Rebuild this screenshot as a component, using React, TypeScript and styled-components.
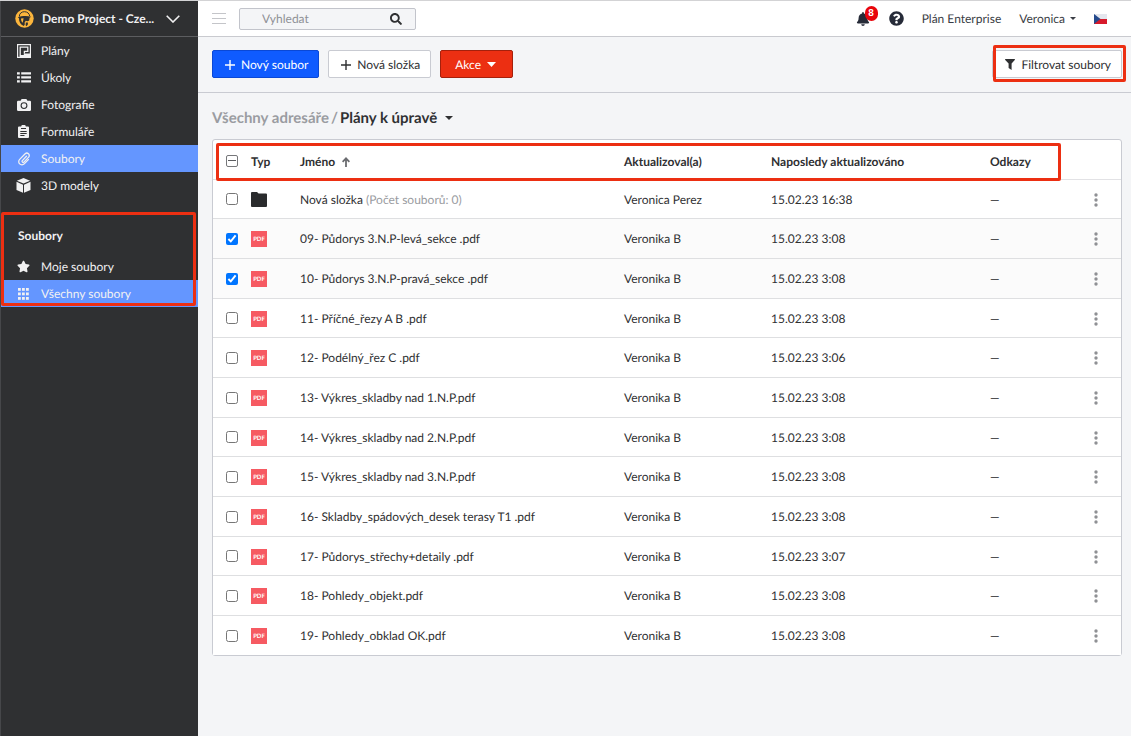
import React, { useEffect, useRef, useState } from "react";
import styled, { createGlobalStyle, css } from "styled-components";
import { FaBell, FaQuestionCircle, FaSearch, FaStar } from "react-icons/fa";

const GlobalStyle = createGlobalStyle`
  *, *::before, *::after { box-sizing: border-box; }
  body {
    margin: 0;
    background: #f4f5f7;
    color: #2f3032;
    font-family: Lato, "Open Sans", sans-serif;
    font-size: 12px;
    line-height: 16px;
    text-rendering: geometricPrecision;
  }
  button, input { font: inherit; color: inherit; text-rendering: inherit; }
  a { color: inherit; text-decoration: none; }
  svg { display: block; flex: none; }
`;

const Page = styled.div`
  display: flex;
  min-height: 100vh;
  border-top: 1px solid #d3d3d5;
`;

const Sidebar = styled.aside`
  flex: none;
  width: 198px;
  background: #2f3032;
  border-left: 1px solid #46474a;
  color: #f1f1f2;
`;

const ProjectButton = styled.button`
  display: flex;
  align-items: center;
  width: 100%;
  height: 36px;
  padding: 0 18px 0 14px;
  border: 0;
  border-bottom: 1px solid #5c5d60;
  background: none;
  font-weight: 700;
  text-align: left;
`;

const ProjectName = styled.span`
  flex: 1;
  padding-left: 8px;
  white-space: nowrap;
`;

const NavList = styled.ul`
  margin: 0;
  padding: 0;
  list-style: none;
`;

const NavLink = styled.a<{ $active?: boolean }>`
  display: flex;
  align-items: center;
  gap: 10px;
  height: 27px;
  padding-left: 15px;
  background: ${(p) => (p.$active ? "#6496ff" : "transparent")};
`;

const NavIcon = styled.span`
  display: flex;
  justify-content: center;
  width: 15px;
`;

const highlight = css`
  content: "";
  position: absolute;
  border: 3px solid #ec2f12;
  border-radius: 2px;
  pointer-events: none;
`;

const Section = styled.section`
  position: relative;
  margin-top: 13px;
  padding-top: 16px;
  &::after {
    ${highlight}
    inset: 0 2px 1px 0;
  }
`;

const SectionTitle = styled.h2`
  margin: 0;
  padding: 0 0 9px 17px;
  font-size: 12px;
  line-height: 16px;
`;

const Main = styled.main`
  flex: 1;
  min-width: 0;
`;

const TopBar = styled.header`
  display: flex;
  align-items: center;
  height: 36px;
  padding: 0 24px 0 14px;
  background: #fff;
  border-bottom: 1px solid #c9cacf;
`;

const PlainButton = styled.button`
  display: flex;
  align-items: center;
  gap: 5px;
  padding: 0;
  border: 0;
  background: none;
`;

const SearchBox = styled.label`
  display: flex;
  align-items: center;
  width: 177px;
  height: 22px;
  margin-left: 13px;
  padding: 0 13px 0 22px;
  border: 1px solid #c2c4cb;
  border-radius: 2px;
  background: #f4f5f7;
`;

const SearchInput = styled.input`
  flex: 1;
  min-width: 0;
  padding: 0;
  border: 0;
  outline: 0;
  background: none;
  &::placeholder { color: #8f9196; opacity: 1; }
`;

const Account = styled.div`
  display: flex;
  align-items: center;
  gap: 18px;
  margin-left: auto;
  color: #3a3d45;
`;

const IconRow = styled.div`
  display: flex;
  align-items: center;
  gap: 19px;
  color: #262b38;
`;

const BellButton = styled(PlainButton)`
  position: relative;
`;

const Badge = styled.span`
  position: absolute;
  top: -6px;
  left: 9px;
  width: 13px;
  height: 15px;
  border-radius: 7px;
  background: #e8050b;
  color: #fff;
  font-family: "Liberation Sans", sans-serif;
  font-size: 10px;
  font-weight: 700;
  line-height: 15px;
  text-align: center;
`;

const Toolbar = styled.div`
  display: flex;
  align-items: flex-start;
  gap: 9px;
  height: 56px;
  padding: 13px 9px 0 14px;
  border-bottom: 1px solid #c9cbd2;
`;

const tones = {
  primary: { bg: "#0f5bff", border: "#0a48d6", text: "#fff" },
  danger: { bg: "#ec2f12", border: "#a5200c", text: "#fff" },
  plain: { bg: "#fff", border: "#c9cbd2", text: "#2f3032" },
};

const Button = styled.button<{ $tone: keyof typeof tones }>`
  display: flex;
  align-items: center;
  gap: 6px;
  height: 28px;
  padding: 1px 10px 0 12px;
  border: 1px solid ${(p) => tones[p.$tone].border};
  border-radius: 2px;
  background: ${(p) => tones[p.$tone].bg};
  color: ${(p) => tones[p.$tone].text};
  white-space: nowrap;
`;

const ActionButton = styled(Button)`
  padding: 1px 16px 0 14px;
`;

const FilterHolder = styled.div`
  position: relative;
  margin-left: auto;
  &::after {
    ${highlight}
    inset: -5px -4px -4px 1px;
  }
`;

const Breadcrumb = styled.nav`
  display: flex;
  align-items: center;
  gap: 2px;
  padding: 15px 14px 11px;
  color: #9a9ca1;
  font-size: 15px;
  font-weight: 700;
  line-height: 20px;
`;

const CurrentFolder = styled(PlainButton)`
  gap: 8px;
  color: #2f3032;
`;

const Card = styled.div`
  position: relative;
  margin: 0 9px 0 14px;
  border: 1px solid #c9cbd2;
  border-radius: 3px;
  background: #fff;
  &::after {
    ${highlight}
    top: 3px;
    left: 3px;
    right: 60px;
    height: 38px;
  }
`;

const Table = styled.table`
  width: 100%;
  table-layout: fixed;
  border-collapse: separate;
  border-spacing: 0;
`;

const HeadCell = styled.th<{ $width?: number }>`
  width: ${(p) => (p.$width ? `${p.$width}px` : "auto")};
  height: 40px;
  padding: 4px 0 0;
  border-bottom: 1px solid #e2e2e5;
  text-align: left;
`;

const Row = styled.tr<{ $selected: boolean }>`
  height: 40px;
  background: ${(p) => (p.$selected ? "#fbfbfb" : "#fff")};
  &:nth-child(3n + 1), &:last-child { height: 39px; }
  & > td {
    padding: 1px 0 0;
    border-bottom: 1px solid #dedfe1;
  }
  &:last-child > td { border-bottom: 0; }
`;

const CheckCell = styled.td`
  text-align: center;
`;

const Check = styled.input`
  display: block;
  width: 12px;
  height: 12px;
  margin: 0 auto 1px;
  accent-color: #0075ff;
`;

const PartialCheck = styled.input`
  display: flex;
  align-items: center;
  justify-content: center;
  width: 12px;
  height: 12px;
  margin: 0 auto 2px;
  appearance: none;
  border: 1px solid #76777a;
  border-radius: 2px;
  &::after {
    content: "";
    width: 8px;
    height: 1px;
    background: #5c5d60;
  }
`;

const SortButton = styled(PlainButton)`
  gap: 7px;
  font-weight: 700;
`;

const Muted = styled.span`
  color: #9a9ca1;
`;

const PdfTag = styled.span`
  display: block;
  width: 16px;
  height: 16px;
  background: #f65a62;
  color: #fff;
  font-size: 6px;
  font-weight: 700;
  line-height: 17px;
  text-align: center;
`;

const MoreButton = styled(PlainButton)`
  margin-left: 12px;
  padding: 0 2px;
`;

const Caret = ({ w = 6, h = 3 }: { w?: number; h?: number }) => (
  <svg width={w} height={h} viewBox="0 0 10 5" preserveAspectRatio="none" fill="currentColor">
    <path d="M0 0H10L5 5Z" />
  </svg>
);

const Plus = () => (
  <svg width="10" height="10" viewBox="0 0 10 10" stroke="currentColor" strokeWidth="1.4">
    <path d="M5 0V10M0 5H10" />
  </svg>
);

const Logo = () => (
  <svg width="19" height="19" viewBox="0 0 19 19">
    <circle cx="9.5" cy="9.5" r="9.2" fill="#fbb53c" />
    <path d="M4.3 7.6C4.2 4.7 6.4 2.7 9.4 2.7s5 1.8 5.3 4.4" fill="none" stroke="#2f3032" strokeWidth="1" />
    <path d="M2.8 8.4C6 6.9 12 6.5 16.2 7.7L14.6 8.7 14.2 11.4 12.6 12.2 10.8 11.8 9.6 13.6 9.8 15.4 8.8 17C5.5 15.6 3.9 12.6 4 9.2Z" fill="#2f3032" />
    <path d="M6 9.4L8.6 9.3 8.2 11.6 7.6 13.8C6.6 12.8 6 11.2 6 9.4Z" fill="#fbb53c" />
    <path d="M10.9 13.6H12.9V15.4L11.6 17.2 10.6 16.2Z" fill="#2f3032" />
  </svg>
);

const PlanIcon = () => (
  <svg width="14" height="14" viewBox="0 0 14 14">
    <path d="M.6 .6H13.4V13.4H.6Z" fill="none" stroke="#f1f1f2" strokeWidth="1.2" />
    <path d="M3.200 11.200V3.200H10.800V7.400H7.400V9.600" fill="none" stroke="#f1f1f2" strokeWidth="1.300" />
    <path d="M5.300 5.400H8.800M2.600 11H6.800V9.600H13V13H2.600Z" stroke="none" fill="#f1f1f2" />
  </svg>
);

const ListIcon = () => (
  <svg width="14" height="11" viewBox="0 0 14 11" fill="#f1f1f2">
    {[0, 4, 8].map((y) => (
      <path key={y} d={`M0 ${y + 0.2}h2.8v2.4h-2.8ZM4.2 ${y + 0.2}h9.8v2.4h-9.8Z`} />
    ))}
  </svg>
);

const CameraIcon = () => (
  <svg width="14" height="12" viewBox="0 0 14 12">
    <path d="M1.3 1.8H3.6L4.6 0H9.4L10.4 1.8H12.7A1.2 1.2 0 0 1 14 3V10.7A1.2 1.2 0 0 1 12.7 12H1.3A1.2 1.2 0 0 1 0 10.7V3A1.2 1.2 0 0 1 1.3 1.8Z" fill="#f1f1f2" />
    <circle cx="7" cy="6.6" r="2.9" fill="none" stroke="#2f3032" strokeWidth="1.1" />
  </svg>
);

const FormIcon = () => (
  <svg width="11" height="13" viewBox="0 0 11 13">
    <path d="M1 1.6H3.2A2.3 1.8 0 0 1 7.8 1.6H10A1 1 0 0 1 11 2.6V12A1 1 0 0 1 10 13H1A1 1 0 0 1 0 12V2.6A1 1 0 0 1 1 1.6Z" fill="#f1f1f2" />
    <path d="M3 3.5H8M2.3 6.5H8.7M2.3 8.5H8.7M2.3 10.5H6.5" stroke="#2f3032" strokeWidth="1" />
  </svg>
);

const ClipIcon = () => (
  <svg width="14" height="14" viewBox="0 0 24 24" fill="none" stroke="#f1f1f2" strokeWidth="2.2" strokeLinecap="round" strokeLinejoin="round">
    <path d="M16.2 7.2L9.2 14.8a1.8 1.8 0 0 0 2.6 2.5L20 8.7a4.2 4.2 0 0 0-6-5.8L4.6 12.6a5.5 5.5 0 0 0 7.8 7.8L19.5 13" />
  </svg>
);

const CubeIcon = () => (
  <svg width="15" height="15" viewBox="0 0 14 15" fill="#f1f1f2">
    <path d="M7 .1L13.6 2.7 7 5.6 .4 2.7Z" />
    <path d="M0 3.8L6.5 6.7V14.8L0 11.9Z" />
    <path d="M14 3.8L7.5 6.7V14.8L14 11.9Z" />
  </svg>
);

const GridIcon = () => (
  <svg width="11" height="12" viewBox="0 0 11 12" fill="#f1f1f2">
    {[0, 4, 8].map((x) => [0, 4.5, 9].map((y) => <rect key={`${x}-${y}`} x={x} y={y} width="2.8" height="2.8" />))}
  </svg>
);

const FilterIcon = () => (
  <svg width="10" height="11" viewBox="0 0 10 11" fill="currentColor">
    <path d="M.3 0H9.7L10 .8 6.6 4.6V11L3.6 9V4.6L0 .8Z" />
  </svg>
);

const FolderIcon = () => (
  <svg width="16" height="15" viewBox="0 0 16 15" fill="#2a2b2d">
    <path d="M1 0H6L7.6 1.6H15a1 1 0 0 1 1 1V14a1 1 0 0 1-1 1H1a1 1 0 0 1-1-1V1a1 1 0 0 1 1-1Z" />
  </svg>
);

const FlagIcon = () => (
  <svg width="13" height="10" viewBox="0 0 13 10">
    <path d="M0 0H13V5H0Z" fill="#e4e7ee" />
    <path d="M0 5H13V10H0Z" fill="#d71a2b" />
    <path d="M0 0L6.5 5 0 10Z" fill="#244a8c" />
  </svg>
);

const navItems = [
  { label: "Plány", icon: <PlanIcon /> },
  { label: "Úkoly", icon: <ListIcon /> },
  { label: "Fotografie", icon: <CameraIcon /> },
  { label: "Formuláře", icon: <FormIcon /> },
  { label: "Soubory", icon: <ClipIcon />, active: true },
  { label: "3D modely", icon: <CubeIcon /> },
];

const files = [
  { name: "Nová složka", note: "(Počet souborů: 0)", by: "Veronica Perez", at: "15.02.23 16:38" },
  { name: "09- Půdorys 3.N.P-levá_sekce .pdf", at: "15.02.23 3:08", checked: true },
  { name: "10- Půdorys 3.N.P-pravá_sekce .pdf", at: "15.02.23 3:08", checked: true },
  { name: "11- Příčné_řezy A B .pdf", at: "15.02.23 3:08" },
  { name: "12- Podélný_řez C .pdf", at: "15.02.23 3:06" },
  { name: "13- Výkres_skladby nad 1.N.P.pdf", at: "15.02.23 3:08" },
  { name: "14- Výkres_skladby nad 2.N.P.pdf", at: "15.02.23 3:08" },
  { name: "15- Výkres_skladby nad 3.N.P.pdf", at: "15.02.23 3:08" },
  { name: "16- Skladby_spádových_desek terasy T1 .pdf", at: "15.02.23 3:08" },
  { name: "17- Půdorys_střechy+detaily .pdf", at: "15.02.23 3:07" },
  { name: "18- Pohledy_objekt.pdf", at: "15.02.23 3:08" },
  { name: "19- Pohledy_obklad OK.pdf", at: "15.02.23 3:08" },
];

function FileTable() {
  const [selected, setSelected] = useState(files.map((f) => !!f.checked));
  const allRef = useRef<HTMLInputElement>(null);
  const count = selected.filter(Boolean).length;

  useEffect(() => {
    if (allRef.current) allRef.current.indeterminate = count > 0 && count < files.length;
  }, [count]);

  return (
    <Card>
      <Table>
        <thead>
          <tr>
            <HeadCell $width={38}>
              <PartialCheck
                ref={allRef}
                type="checkbox"
                aria-label="Vybrat vše"
                checked={count === files.length}
                onChange={(e) => setSelected(files.map(() => e.target.checked))}
              />
            </HeadCell>
            <HeadCell $width={49}>Typ</HeadCell>
            <HeadCell>
              <SortButton>
                Jméno
                <svg width="8" height="10" viewBox="0 0 8 10" fill="none" stroke="#6b6c70" strokeWidth="1.8">
                  <path d="M4 10V1.5M.6 4.8L4 1.3 7.4 4.8" />
                </svg>
              </SortButton>
            </HeadCell>
            <HeadCell $width={147}>Aktualizoval(a)</HeadCell>
            <HeadCell $width={219}>Naposledy aktualizováno</HeadCell>
            <HeadCell $width={90}>Odkazy</HeadCell>
            <HeadCell $width={41} aria-label="Akce" />
          </tr>
        </thead>
        <tbody>
          {files.map((file, i) => (
            <Row key={file.name} $selected={selected[i]}>
              <CheckCell>
                <Check
                  type="checkbox"
                  aria-label={file.name}
                  checked={selected[i]}
                  onChange={() => setSelected(selected.map((s, j) => (j === i ? !s : s)))}
                />
              </CheckCell>
              <td>{file.note ? <FolderIcon /> : <PdfTag>PDF</PdfTag>}</td>
              <td>
                {file.name} {file.note && <Muted>{file.note}</Muted>}
              </td>
              <td>{file.by ?? "Veronika B"}</td>
              <td>{file.at}</td>
              <td>—</td>
              <td>
                <MoreButton aria-label="Možnosti">
                  <svg width="4" height="14" viewBox="0 0 4 14" fill="#8f9094">
                    <circle cx="2" cy="2" r="1.7" />
                    <circle cx="2" cy="7" r="1.7" />
                    <circle cx="2" cy="12" r="1.7" />
                  </svg>
                </MoreButton>
              </td>
            </Row>
          ))}
        </tbody>
      </Table>
    </Card>
  );
}

export default function App() {
  return (
    <Page>
      <GlobalStyle />
      <Sidebar>
        <ProjectButton>
          <Logo />
          <ProjectName>Demo Project - Cze...</ProjectName>
          <svg width="14" height="8" viewBox="0 0 14 8" fill="none" stroke="#f1f1f2" strokeWidth="1.6">
            <path d="M.7 .8L7 7 13.3 .8" />
          </svg>
        </ProjectButton>
        <nav>
          <NavList>
            {navItems.map((item) => (
              <li key={item.label}>
                <NavLink href="#" $active={item.active}>
                  <NavIcon>{item.icon}</NavIcon>
                  {item.label}
                </NavLink>
              </li>
            ))}
          </NavList>
        </nav>
        <Section>
          <SectionTitle>Soubory</SectionTitle>
          <NavList>
            <li>
              <NavLink href="#">
                <NavIcon><FaStar size={13} /></NavIcon>
                Moje soubory
              </NavLink>
            </li>
            <li>
              <NavLink href="#" $active>
                <NavIcon><GridIcon /></NavIcon>
                Všechny soubory
              </NavLink>
            </li>
          </NavList>
        </Section>
      </Sidebar>
      <Main>
        <TopBar>
          <PlainButton aria-label="Menu">
            <svg width="14" height="11" viewBox="0 0 14 11" stroke="#c4c5c9">
              <path d="M0 .5H14M0 5.5H14M0 10.5H14" />
            </svg>
          </PlainButton>
          <SearchBox>
            <SearchInput type="text" placeholder="Vyhledat" aria-label="Vyhledat" />
            <FaSearch size={12} />
          </SearchBox>
          <Account>
            <IconRow>
              <BellButton aria-label="Oznámení">
                <FaBell size={14} />
                <Badge>8</Badge>
              </BellButton>
              <PlainButton aria-label="Nápověda">
                <FaQuestionCircle size={15} />
              </PlainButton>
            </IconRow>
            <a href="#">Plán Enterprise</a>
            <PlainButton>
              Veronica
              <Caret />
            </PlainButton>
            <PlainButton aria-label="Čeština">
              <FlagIcon />
            </PlainButton>
          </Account>
        </TopBar>
        <Toolbar>
          <Button $tone="primary">
            <Plus />
            Nový soubor
          </Button>
          <Button $tone="plain">
            <Plus />
            Nová složka
          </Button>
          <ActionButton $tone="danger">
            Akce
            <Caret w={9} h={5} />
          </ActionButton>
          <FilterHolder>
            <Button $tone="plain">
              <FilterIcon />
              Filtrovat soubory
            </Button>
          </FilterHolder>
        </Toolbar>
        <Breadcrumb>
          <a href="#">Všechny adresáře</a>
          <span>/</span>
          <CurrentFolder>
            Plány k úpravě
            <Caret w={8} h={4} />
          </CurrentFolder>
        </Breadcrumb>
        <FileTable />
      </Main>
    </Page>
  );
}
